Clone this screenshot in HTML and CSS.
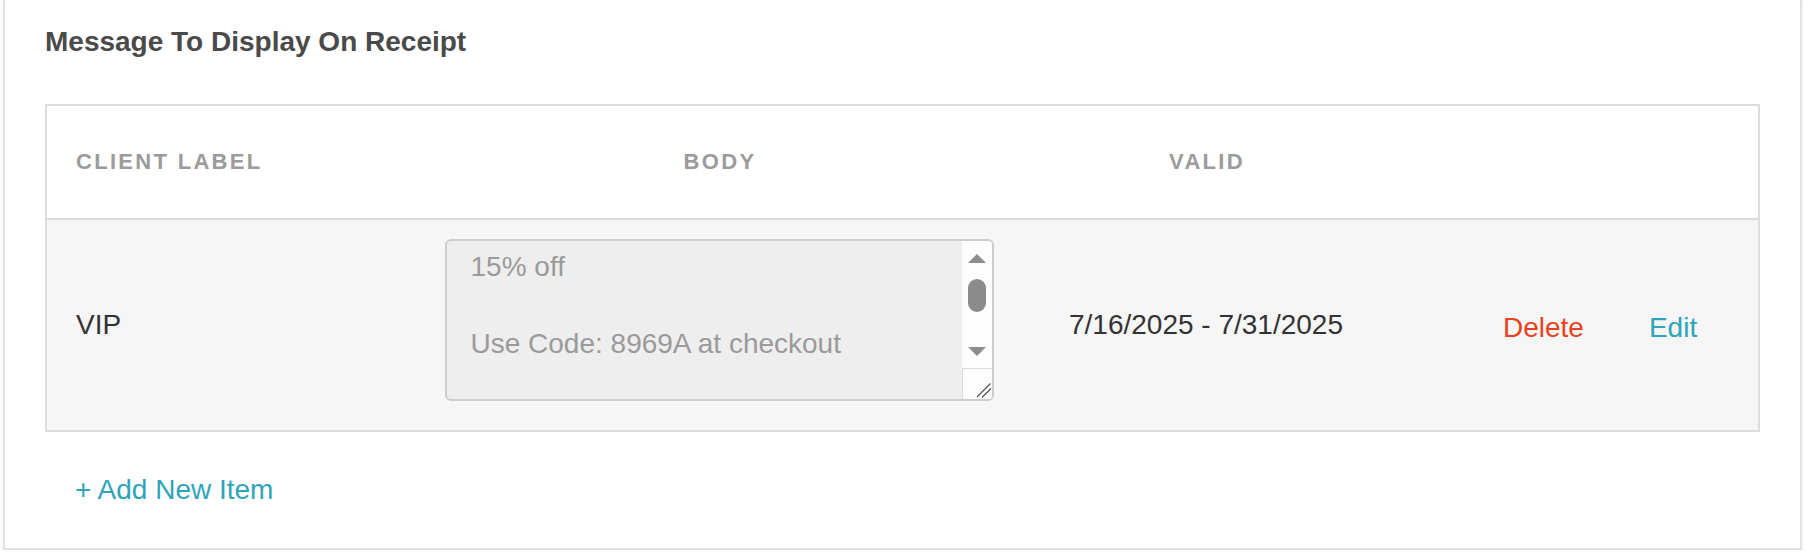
FILE: index.html
```html
<!DOCTYPE html>
<html lang="en">
<head>
<meta charset="utf-8">
<title>Message To Display On Receipt</title>
<link rel="stylesheet" href="styles.css">
</head>
<body>
<div class="card">
  <h2 class="title">Message To Display On Receipt</h2>
  <div class="table">
    <div class="row head">
      <div class="cell c-label">CLIENT LABEL</div>
      <div class="cell c-body">BODY</div>
      <div class="cell c-valid">VALID</div>
      <div class="cell c-actions"></div>
    </div>
    <div class="row item">
      <div class="cell c-label">VIP</div>
      <div class="cell c-body">
        <div class="textbox">
          <div class="textbox-text">15% off

Use Code: 8969A at checkout</div>
          <svg class="scrollbar" width="30" height="158" viewBox="0 0 30 158" aria-hidden="true">
            <rect x="0" y="0" width="30" height="158" fill="#fdfdfd"/>
            <polygon points="15,13 24,22 6,22" fill="#8d8d8d"/>
            <rect x="6" y="38" width="18" height="33" rx="9" fill="#8b8b8b"/>
            <polygon points="6,106 24,106 15,115" fill="#8d8d8d"/>
            <line x1="0" y1="127.5" x2="30" y2="127.5" stroke="#dcdcdc" stroke-width="1"/>
            <line x1="0.5" y1="127" x2="0.5" y2="158" stroke="#dcdcdc" stroke-width="1"/>
            <line x1="15" y1="156" x2="28.5" y2="142.5" stroke="#555" stroke-width="1.3"/>
            <line x1="20" y1="156.5" x2="29" y2="147.5" stroke="#555" stroke-width="1.3"/>
          </svg>
        </div>
      </div>
      <div class="cell c-valid">7/16/2025 - 7/31/2025</div>
      <div class="cell c-actions">
        <a class="link delete" href="#">Delete</a>
        <a class="link edit" href="#">Edit</a>
      </div>
    </div>
  </div>
  <a class="add" href="#">+ Add New Item</a>
</div>
</body>
</html>
```

FILE: styles.css
```css
html, body {
  margin: 0;
  padding: 0;
  background: #ffffff;
}

body {
  font-family: "Liberation Sans", Arial, Helvetica, sans-serif;
  color: #333333;
}

.card {
  margin-left: 3px;
  width: 1715px;
  padding: 26px 40px 42px 40px;
  border: 2px solid #e1e1e1;
  border-top: 0;
  background: #ffffff;
  box-shadow: 0 2px 4px rgba(0, 0, 0, 0.06);
}

.title {
  margin: 0 0 46px 0;
  font-size: 28px;
  line-height: 32px;
  font-weight: bold;
  color: #4a4a4a;
}

.table {
  border: 2px solid #dddddd;
}

.row {
  display: grid;
  grid-template-columns: 372px 600px 374px 1fr;
}

.head {
  height: 112px;
  background: #ffffff;
  border-bottom: 2px solid #dddddd;
}

.head .cell {
  display: flex;
  align-items: center;
  font-size: 22px;
  line-height: 26px;
  font-weight: bold;
  letter-spacing: 2.3px;
  color: #9b9b9b;
}

.item {
  height: 210px;
  background: #f6f6f6;
}

.item .cell {
  display: flex;
  align-items: center;
  font-size: 28px;
  line-height: 32px;
  color: #333333;
}

.c-label {
  padding-left: 29px;
}

.c-body,
.c-valid {
  justify-content: center;
}

.head .c-body,
.head .c-valid {
  padding-left: 2px;
}

.item .c-body {
  align-items: flex-start;
  padding-top: 19px;
}

.textbox {
  display: flex;
  width: 545px;
  height: 158px;
  border: 2px solid #cdcdcd;
  border-radius: 6px;
  background: #eeeeee;
  overflow: hidden;
}

.textbox-text {
  flex: 1;
  padding: 7px 24px 0 24px;
  font-size: 28px;
  line-height: 38.3px;
  color: #9a9a9a;
  white-space: pre-line;
}

.scrollbar {
  display: block;
  flex: 0 0 30px;
}

.item .c-actions {
  padding-left: 110px;
  padding-top: 5px;
  gap: 65px;
}

.link {
  text-decoration: none;
}

.delete {
  color: #e5421d;
}

.edit {
  color: #2fa4b9;
}

.add {
  display: block;
  width: max-content;
  margin: 42px 0 0 30px;
  font-size: 28px;
  line-height: 32px;
  color: #2fa4b9;
  text-decoration: none;
}
```
